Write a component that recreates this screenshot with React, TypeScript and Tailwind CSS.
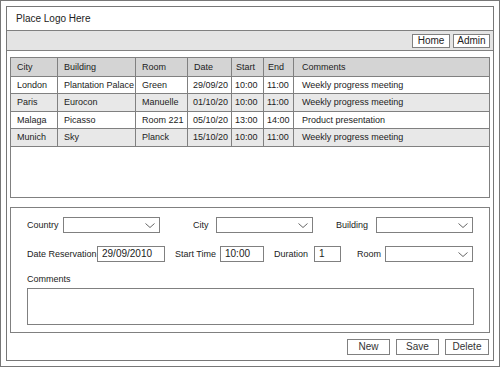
import React from 'react';

const rows = [
  { city: 'London', building: 'Plantation Palace', room: 'Green', date: '29/09/20', start: '10:00', end: '11:00', comments: 'Weekly progress meeting', alt: false, h: 'h-[16px]' },
  { city: 'Paris', building: 'Eurocon', room: 'Manuelle', date: '01/10/20', start: '10:00', end: '11:00', comments: 'Weekly progress meeting', alt: true, h: 'h-[17px]' },
  { city: 'Malaga', building: 'Picasso', room: 'Room 221', date: '05/10/20', start: '13:00', end: '14:00', comments: 'Product presentation', alt: false, h: 'h-[16px]' },
  { city: 'Munich', building: 'Sky', room: 'Planck', date: '15/10/20', start: '10:00', end: '11:00', comments: 'Weekly progress meeting', alt: true, h: 'h-[17px]' },
];

const cols = 'grid grid-cols-[46px_78px_52px_44px_32px_30px_1fr]';
const cell = 'border-l border-[#808080] first:border-l-0 whitespace-nowrap overflow-hidden flex items-center';

const Chevron = () => (
  <svg width="10" height="5" viewBox="0 0 10 5" fill="none" stroke="#666" strokeWidth="1">
    <path d="M0.5 0.5 L5 4.5 L9.5 0.5" />
  </svg>
);

const Select = ({ w }: { w: string }) => (
  <div className={`${w} h-[16px] border border-[#808080] bg-white flex items-center justify-end pr-[4px]`}>
    <Chevron />
  </div>
);

const Input = ({ w, value }: { w: string; value: string }) => (
  <div className={`${w} h-[16px] border border-[#808080] bg-white flex items-center pl-[4px] text-[10px]`}>{value}</div>
);

const Btn = ({ label, w }: { label: string; w: string }) => (
  <button className={`${w} h-full border border-[#808080] bg-white flex items-center justify-center text-[#333] text-[10px]`}>{label}</button>
);

export default function App() {
  return (
    <div
      className="w-[500px] h-[367px] border border-[#777] p-[5px] bg-white text-[9px] text-[#222] leading-none"
      style={{ fontFamily: '"Liberation Sans", Arial, sans-serif' }}
    >
      <div className="h-full border border-[#777] flex flex-col">
        {/* Header */}
        <div className="h-[24px] border-b border-[#808080] flex items-center pl-[9px] text-[10px]">Place Logo Here</div>

        {/* Nav */}
        <div className="h-[20px] border-b border-[#808080] bg-[#e4e4e4] flex items-center justify-end gap-[3px] pr-[3px] text-[10px]">
          <div className="w-[38px] h-[14px] border border-[#808080] bg-white flex items-center justify-center">Home</div>
          <div className="w-[37px] h-[14px] border border-[#808080] bg-white flex items-center justify-center">Admin</div>
        </div>

        <div className="flex-1 flex flex-col px-[3px] pt-[6px]">
          {/* Table */}
          <div className="h-[141px] border border-[#808080]">
            <div className={`${cols} h-[19px] bg-[#d4d4d4] border-b border-[#808080]`}>
              {['City', 'Building', 'Room', 'Date', 'Start', 'End', 'Comments'].map((h, i) => (
                <div key={h} className={`${cell} ${i === 6 ? 'pl-[8px]' : i >= 4 ? 'pl-[4px]' : 'pl-[6px]'}`}>{h}</div>
              ))}
            </div>
            {rows.map((r) => (
              <div key={r.city} className={`${cols} ${r.h} box-content border-b border-[#808080] ${r.alt ? 'bg-[#e8e8e8]' : 'bg-white'}`}>
                <div className={`${cell} pl-[6px]`}>{r.city}</div>
                <div className={`${cell} pl-[6px]`}>{r.building}</div>
                <div className={`${cell} pl-[6px]`}>{r.room}</div>
                <div className={`${cell} pl-[5px]`}>{r.date}</div>
                <div className={`${cell} pl-[3px]`}>{r.start}</div>
                <div className={`${cell} pl-[3px]`}>{r.end}</div>
                <div className={`${cell} pl-[8px]`}>{r.comments}</div>
              </div>
            ))}
          </div>

          {/* Form */}
          <div className="mt-[9px] h-[126px] border border-[#808080] pl-[16px] pt-[9px] flex flex-col">
            <div className="flex items-center">
              <span className="w-[36px]">Country</span>
              <Select w="w-[97px]" />
              <span className="ml-[33px] w-[23px]">City</span>
              <Select w="w-[97px]" />
              <span className="ml-[23px] w-[40px]">Building</span>
              <Select w="w-[97px]" />
            </div>
            <div className="flex items-center mt-[13px]">
              <span className="w-[70px]">Date Reservation</span>
              <Input w="w-[68px]" value="29/09/2010" />
              <span className="ml-[10px] w-[45px]">Start Time</span>
              <Input w="w-[44px]" value="10:00" />
              <span className="ml-[10px] w-[40px]">Duration</span>
              <Input w="w-[27px]" value="1" />
              <span className="ml-[16px] w-[28px]">Room</span>
              <Select w="w-[88px]" />
            </div>
            <div className="mt-[11px] h-[12px] flex items-center">Comments</div>
            <div className="mt-[3px] w-[447px] h-[37px] border border-[#808080] bg-white" />
          </div>

          {/* Actions */}
          <div className="mt-[6px] h-[16px] flex justify-end gap-[6px] pr-[1px]">
            <Btn label="New" w="w-[43px]" />
            <Btn label="Save" w="w-[43px]" />
            <Btn label="Delete" w="w-[44px]" />
          </div>
        </div>
      </div>
    </div>
  );
}
